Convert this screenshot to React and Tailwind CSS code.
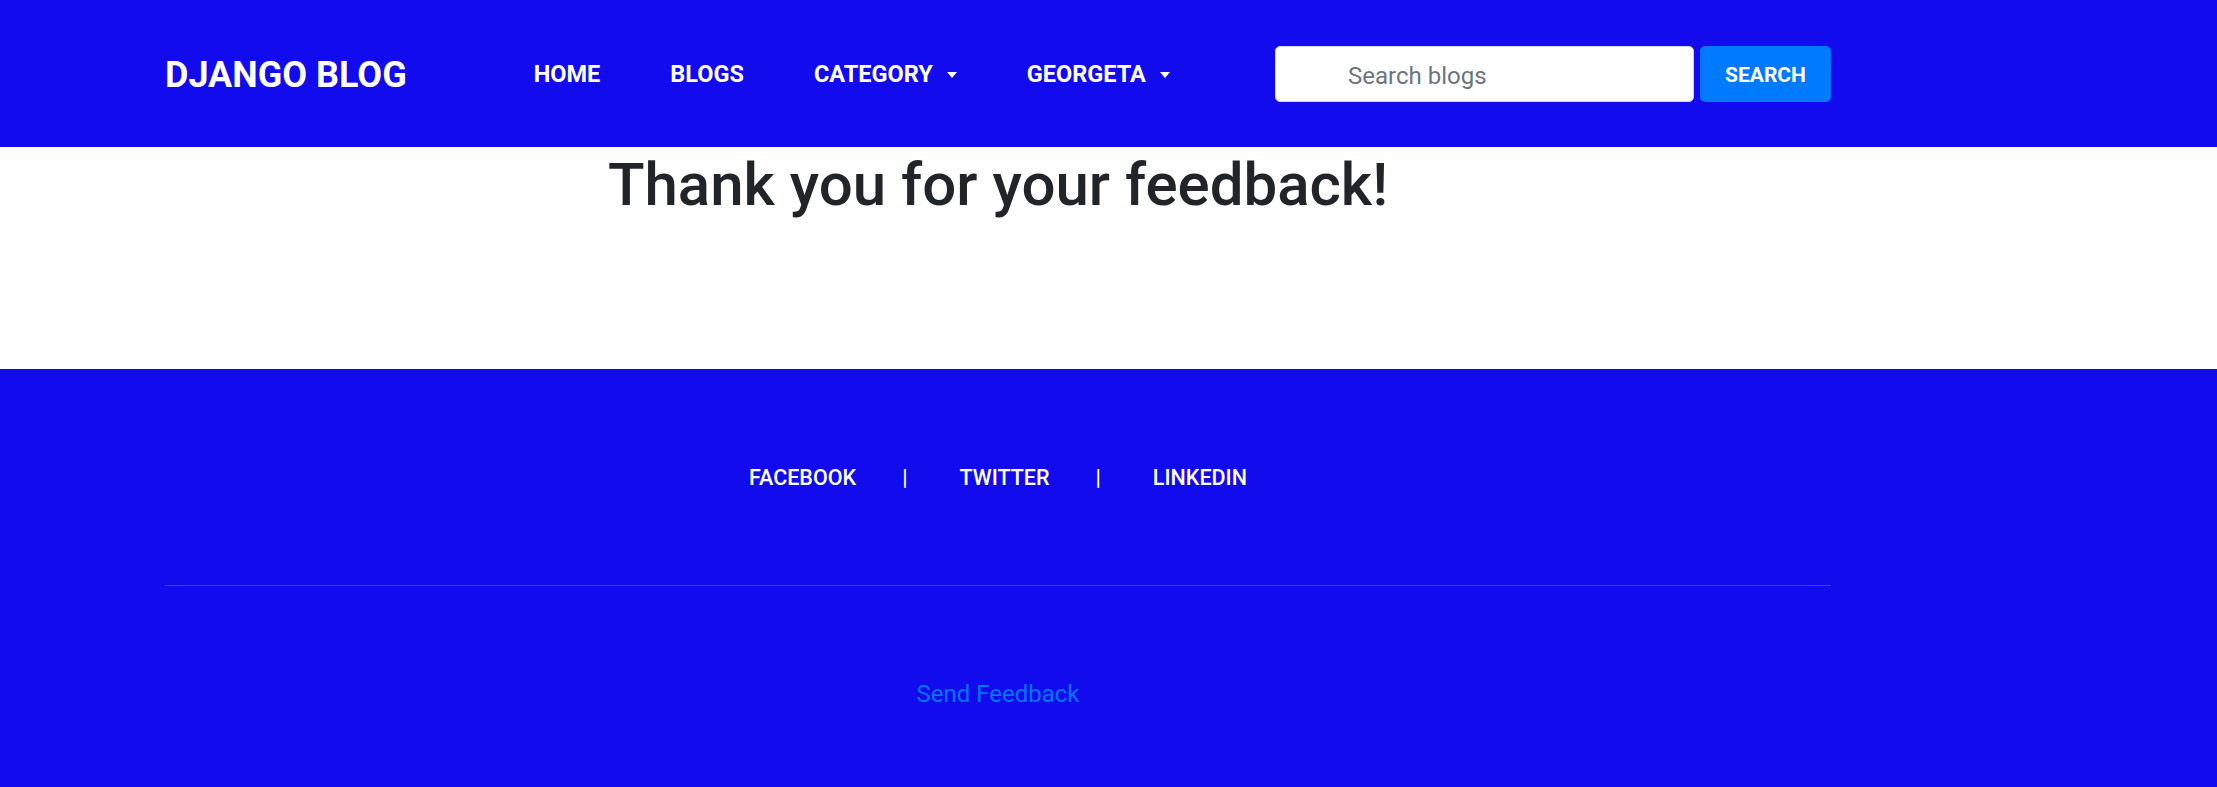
const NAV = [
  { label: "HOME" },
  { label: "BLOGS" },
  { label: "CATEGORY", caret: true },
  { label: "GEORGETA", caret: true },
]

const SOCIAL = ["FACEBOOK", "TWITTER", "LINKEDIN"]

function Caret() {
  return (
    <span className="ml-[14px] inline-block h-0 w-0 border-x-[5.5px] border-t-[6px] border-x-transparent border-t-white align-[3px]" />
  )
}

export default function App() {
  return (
    <div className="min-h-[787px] bg-white font-['Roboto',sans-serif]">
      <header className="h-[147px] bg-[#110bee]">
        <div className="ml-[165px] flex h-full w-[1666px] items-center">
          <a className="pt-[2px] text-[36px] font-bold leading-none text-white">DJANGO BLOG</a>
          <nav className="ml-[127px] flex items-center gap-[70px]">
            {NAV.map(n => (
              <a key={n.label} className="flex items-center pt-[3px] text-[23.5px] font-bold leading-none text-white">
                {n.label}
                {n.caret && <Caret />}
              </a>
            ))}
          </nav>
          <form className="ml-auto flex items-center pt-[1px]">
            <input
              placeholder="Search blogs"
              className="h-[56px] w-[419px] rounded-[5px] border border-[#ced4da] bg-white pt-[3px] pl-[72px] text-[24px] text-[#495057] outline-none placeholder:text-[#6c757d]"
            />
            <button type="button" className="ml-[6px] h-[56px] w-[131px] rounded-[5px] bg-[#007bff] pt-[3px] text-[21px] font-bold text-white">
              SEARCH
            </button>
          </form>
        </div>
      </header>

      <main className="h-[222px] bg-white">
        <div className="ml-[165px] w-[1666px] text-center">
          <h1 className="pt-[2px] text-[60px] font-medium leading-[1.2] text-[#212529]">Thank you for your feedback!</h1>
        </div>
      </main>

      <footer className="h-[418px] bg-[#110bee]">
        <div className="ml-[165px] w-[1666px] pt-[97px]">
          <div className="flex items-center justify-center text-[21.5px] font-medium leading-[24px] text-white">
            {SOCIAL.map((s, i) => (
              <div key={s} className="flex items-center">
                {i > 0 && <span className="ml-[46px] mr-[52px] text-white">|</span>}
                <a>{s}</a>
              </div>
            ))}
          </div>
          <div className="mt-[95px] h-px bg-[#3f3bf5]" />
          <div className="mt-[95px] text-center">
            <a className="text-[24px] leading-[27px] text-[#0077ff]">Send Feedback</a>
          </div>
        </div>
      </footer>
    </div>
  )
}
